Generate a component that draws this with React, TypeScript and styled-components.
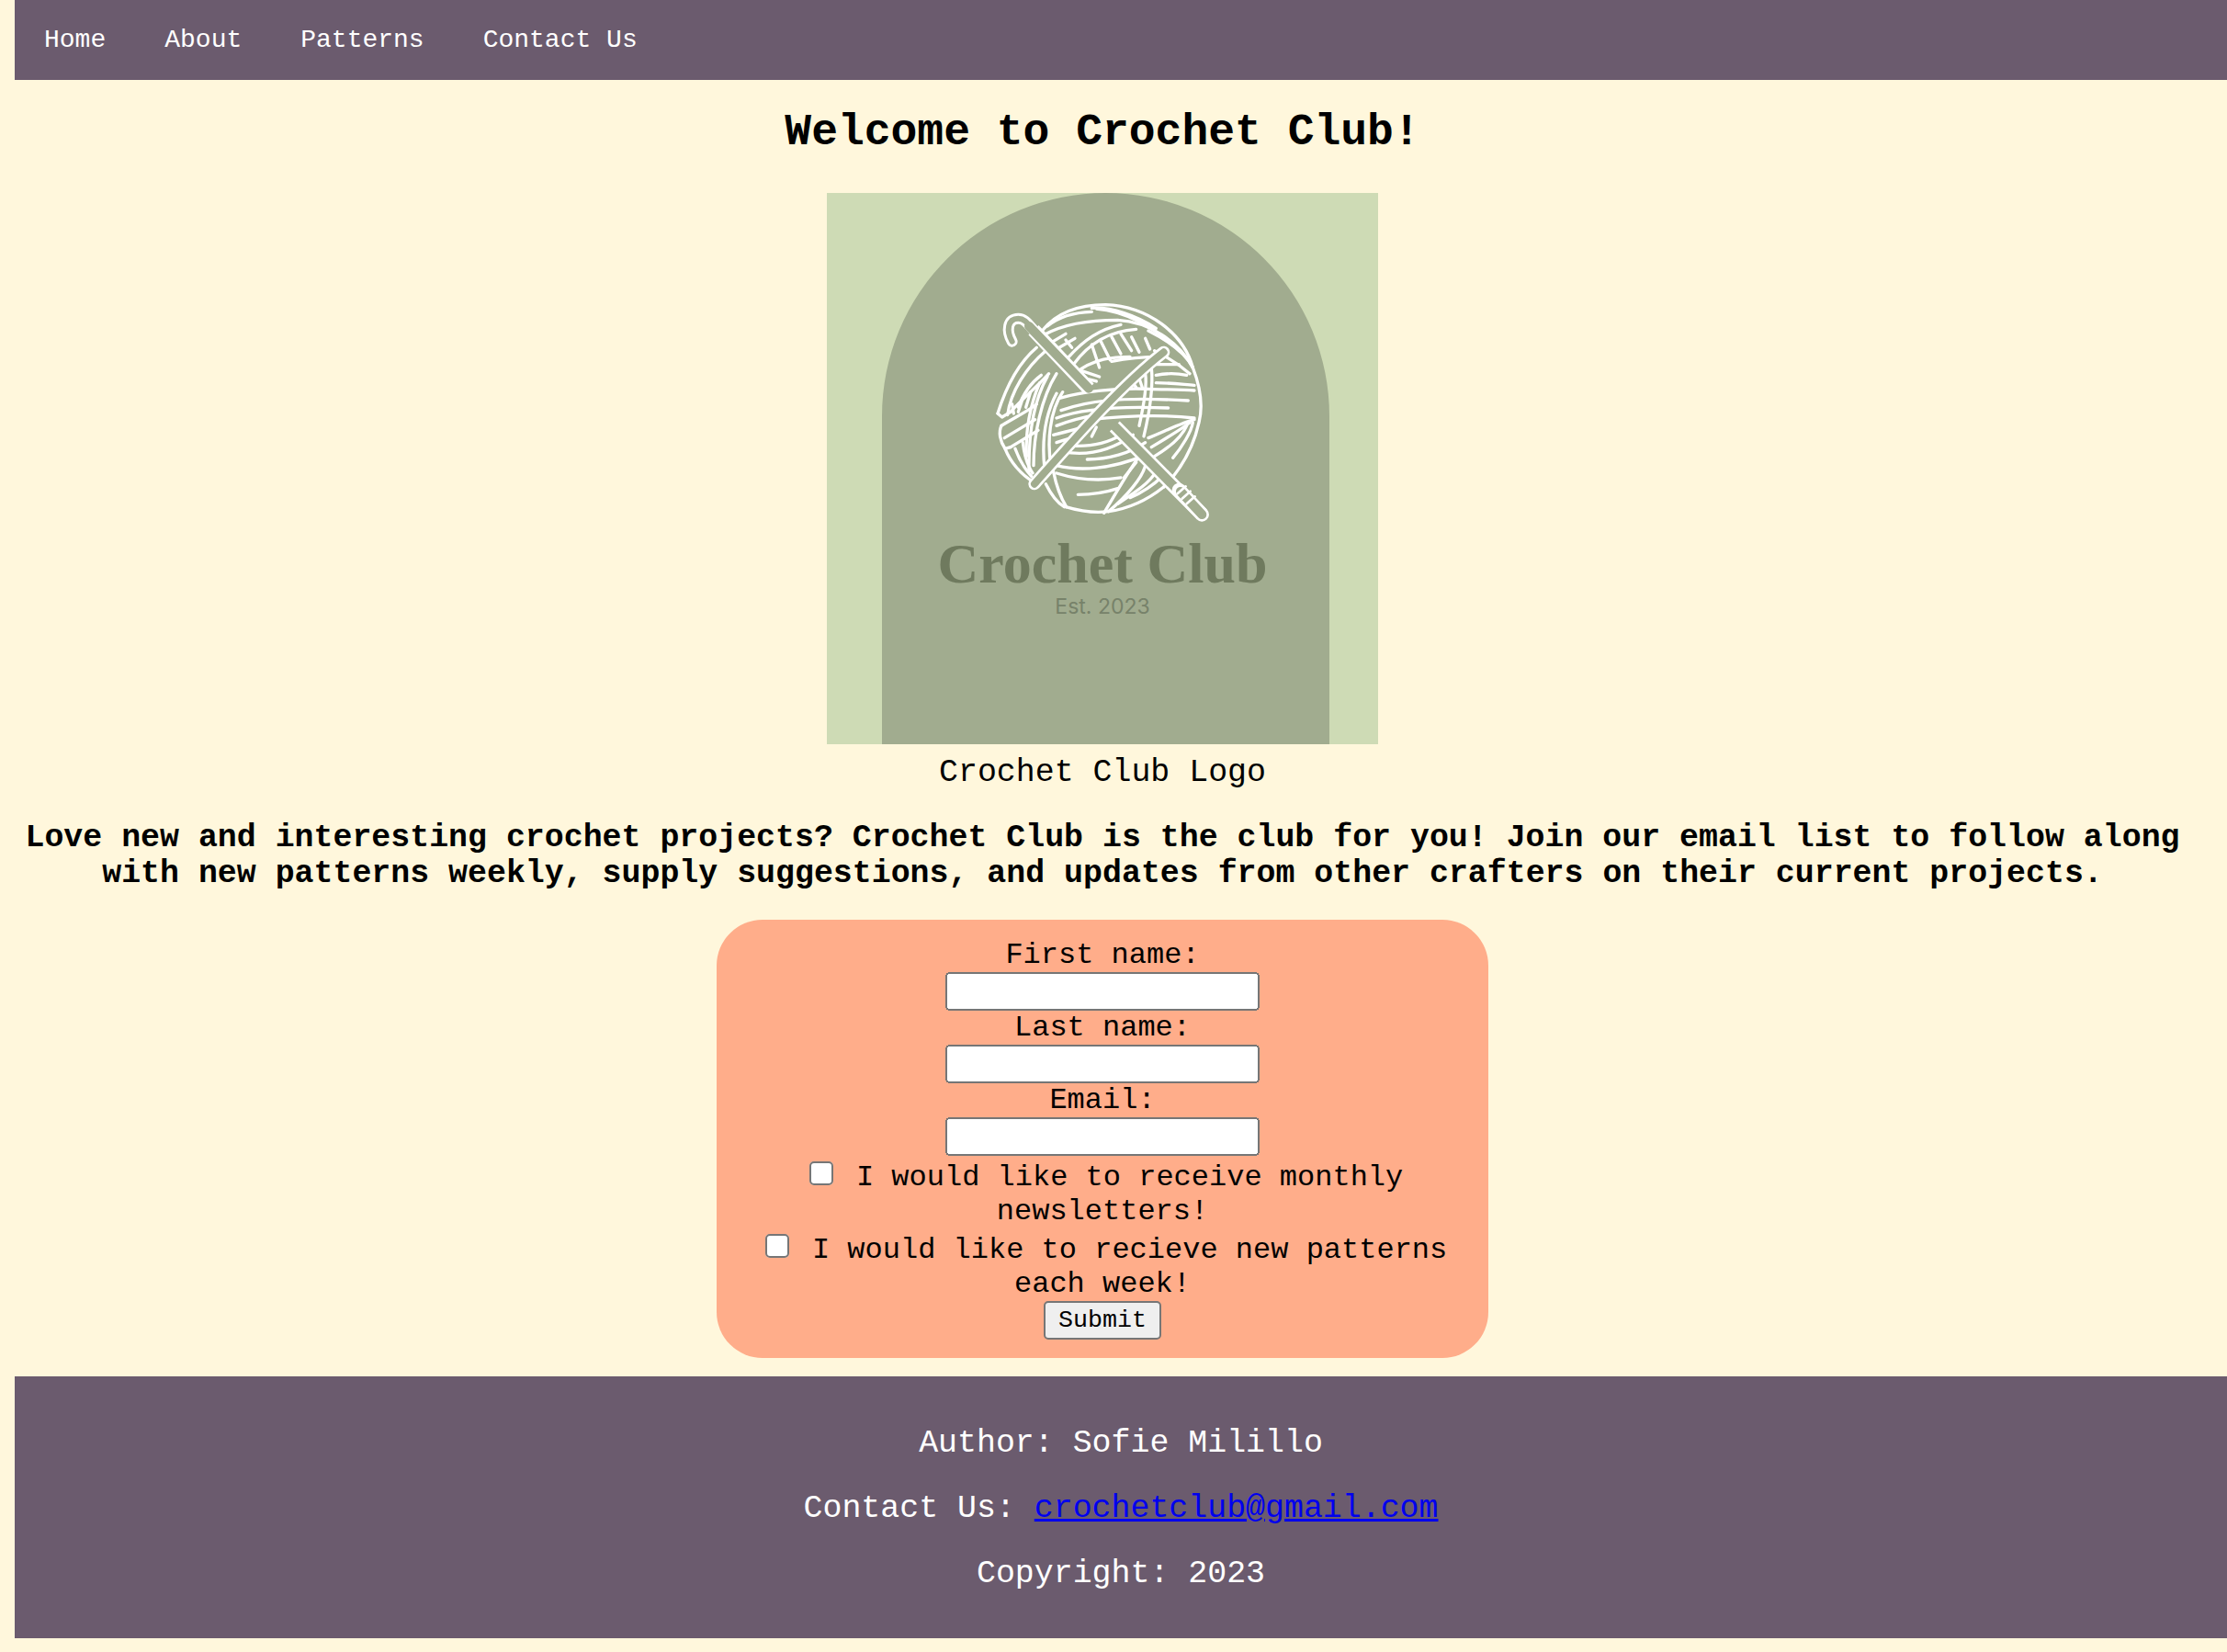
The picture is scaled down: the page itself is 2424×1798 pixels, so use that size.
import React from "react";
import styled, { createGlobalStyle } from "styled-components";

const Global = createGlobalStyle`
  html, body { margin: 0; padding: 0; background: #fff7dc; }
  body { overflow: hidden; font-family: "Liberation Mono", "Courier New", monospace; color: #000; }
`;
const Page = styled.div`
  padding: 0 0 15px 16px;
`;
const Nav = styled.nav`
  background: #6b5b6e;
  height: 87px;
  display: flex;
  align-items: center;
  padding-left: 0;
`;
const NavLink = styled.a`
  color: #fff;
  font-size: 28px;
  padding: 0 32px;
  text-decoration: none;
`;
const Main = styled.main`
  width: 2368px;
  text-align: center;
`;
const Title = styled.h1`
  font-size: 48px;
  line-height: 54px;
  margin: 30px 0 39px;
`;
const Figure = styled.figure`
  margin: 0;
  font-size: 34.9px;
  line-height: 40px;
  display: flex;
  flex-direction: column;
  align-items: center;
  gap: 11px;
`;
const Logo = styled.svg`
  width: 600px;
  height: 600px;
  display: block;
`;
const Intro = styled.p`
  font-size: 34.9px;
  line-height: 39px;
  font-weight: 700;
  margin: 31px 0 31px;
`;
const Form = styled.form`
  width: 840px;
  box-sizing: border-box;
  margin: 0 auto;
  padding: 20px;
  border-radius: 50px;
  background: #ffad8a;
  font-size: 32px;
  text-align: center;
`;
const TextInput = styled.input`
  zoom: 2;
  width: 171px;
  box-sizing: border-box;
  font-family: "Liberation Mono", monospace;
`;
const Check = styled.input`
  zoom: 2;
`;
const Submit = styled.button`
  zoom: 2;
  font-family: "Liberation Mono", monospace;
`;
const Footer = styled.footer`
  margin-top: 20px;
  height: 285px;
  box-sizing: border-box;
  padding-top: 53px;
  background: #6b5b6e;
  color: #fff;
  font-size: 34.9px;
  line-height: 40px;
  text-align: center;
`;
const FootLine = styled.p`
  margin: 0 0 31px;
`;

const strands = [
  "M255 178C300 122 370 95 460 95C600 100 715 190 745 300",
  "M270 165C310 132 360 120 415 118",
  "M262 192C320 160 400 145 500 145C600 150 700 215 745 300",
  "M430 108C520 115 620 165 700 245",
  "M415 106C480 102 560 130 625 172",
  "M600 180C660 210 720 250 745 300",
  "M745 300C772 370 778 430 765 480C745 570 700 640 650 690",
  "M330 755C380 770 430 775 470 770C540 760 600 730 650 690",
  "M108 450C130 380 170 290 235 235",
  "M140 455C150 380 200 300 265 245",
  "M108 450L122 462L150 445",
  "M175 430C190 390 215 350 250 325",
  "M150 445C190 400 240 360 275 320",
  "M155 420L160 450",
  "M190 400L175 445",
  "M215 380L200 430",
  "M120 490C170 460 210 440 235 420",
  "M130 530L230 470",
  "M150 560L240 505",
  "M120 490C110 510 115 540 132 565L150 560",
  "M132 565C150 610 185 650 222 672",
  "M165 565C178 600 195 630 218 655",
  "M190 545C195 590 205 620 222 645",
  "M300 320C250 400 225 520 225 620",
  "M270 330C230 400 208 500 210 640",
  "M245 350C215 420 198 500 202 590",
  "M320 380C280 440 265 540 285 640",
  "M300 385C265 450 250 540 262 640",
  "M290 640C300 690 320 735 332 755",
  "M265 680C280 710 300 740 325 755",
  "M310 400C380 380 500 365 600 370C650 372 710 372 750 375",
  "M315 440C400 410 500 395 730 408",
  "M300 465C380 435 500 425 665 432",
  "M410 470C500 460 620 450 750 465",
  "M300 490C340 475 400 460 430 455",
  "M290 520C330 510 370 500 400 490",
  "M300 545C330 535 350 530 370 522",
  "M320 575C400 590 480 570 550 520",
  "M340 555C410 560 470 545 510 520",
  "M400 600C470 600 540 580 590 545",
  "M300 620C380 640 480 630 580 590",
  "M300 645C380 670 450 670 510 660",
  "M370 715C420 715 470 705 500 695",
  "M600 530C650 510 710 480 750 470",
  "M610 560C660 530 710 500 735 480",
  "M620 590C670 560 710 525 725 490",
  "M680 595C710 560 740 510 745 480",
  "M455 775C500 700 540 630 570 590",
  "M470 770C530 720 580 660 590 620",
  "M500 745C560 705 600 680 625 640",
  "M520 660L560 610",
  "M540 725C580 710 620 680 640 660",
  "M340 265C390 210 440 175 510 160",
  "M280 220L330 190",
  "M300 240L360 205",
  "M330 210L350 235",
  "M355 290C410 215 480 180 560 175",
  "M415 225L440 300",
  "M445 215L475 275",
  "M480 200L510 255",
  "M510 190L545 245",
  "M545 200L570 250",
  "M590 205L605 240",
  "M360 320C420 270 490 265 540 265",
  "M380 310L440 330",
  "M390 335L430 345",
  "M480 280C530 270 570 265 640 265",
  "M610 300C615 350 610 420 585 525",
  "M590 320C595 350 590 400 570 490",
  "M625 325C660 318 700 320 725 325",
  "M625 290L700 290",
  "M620 245C660 265 700 290 735 320",
  "M625 350C670 350 710 355 750 358",
  "M540 335L560 365",
  "M570 335L580 365",
  "M415 525L430 495",
  "M350 560L395 510",
];

const YarnLogo = () => (
  <Logo viewBox="0 0 600 600" role="img" aria-label="Crochet Club logo">
    <rect width="600" height="600" fill="#cedbb5" />
    <path d="M60 600V243a243.500 243 0 0 1 487 0V600Z" fill="#a1ac8f" />
    <g transform="translate(150 90) scale(.3333)" fill="none" strokeLinecap="round" strokeLinejoin="round">
      <g stroke="#fff" strokeWidth="10">
        {strands.map((d) => (
          <path key={d} d={d} />
        ))}
      </g>
      <path d="M155 215C135 180 140 140 175 140C195 140 205 155 225 178" stroke="#fff" strokeWidth="36" />
      <path d="M155 215C135 180 140 140 175 140C195 140 205 155 225 178" stroke="#a1ac8f" strokeWidth="18" />
      <path d="M225 178L405 368M490 492L775 780" stroke="#fff" strokeWidth="46" strokeLinecap="butt" />
      <path d="M210 165L405 368M490 492L775 780" stroke="#a1ac8f" strokeWidth="30" />
      <path d="M775 780L700 700" stroke="#fff" strokeWidth="46" />
      <path d="M775 780L705 705" stroke="#a1ac8f" strokeWidth="30" />
      <path d="M695 712L722 688M710 728L737 704M725 745L752 721" stroke="#fff" strokeWidth="8" />
      <path d="M650 250C520 350 370 520 228 680" stroke="#fff" strokeWidth="40" />
      <path d="M650 250C520 350 370 520 228 680" stroke="#a1ac8f" strokeWidth="24" />
    </g>
    <text x="300" y="424" textAnchor="middle" fontFamily="'Liberation Serif', serif" fontWeight="700" fontSize="62" fill="#6f7a5e">
      Crochet Club
    </text>
    <text x="300" y="458" textAnchor="middle" fontFamily="Inter, sans-serif" fontSize="23" fill="#77826a">
      Est. 2023
    </text>
  </Logo>
);

export default function App() {
  return (
    <Page>
      <Global />
      <Nav>
        <NavLink>Home</NavLink>
        <NavLink>About</NavLink>
        <NavLink>Patterns</NavLink>
        <NavLink>Contact Us</NavLink>
      </Nav>
      <Main>
        <Title>Welcome to Crochet Club!</Title>
        <Figure>
          <YarnLogo />
          <figcaption>Crochet Club Logo</figcaption>
        </Figure>
        <Intro>
          Love new and interesting crochet projects? Crochet Club is the club for you! Join our email list to follow
          along with new patterns weekly, supply suggestions, and updates from other crafters on their current projects.
        </Intro>
        <Form>
          <label htmlFor="first">First name:</label>
          <br />
          <TextInput id="first" type="text" />
          <br />
          <label htmlFor="last">Last name:</label>
          <br />
          <TextInput id="last" type="text" />
          <br />
          <label htmlFor="email">Email:</label>
          <br />
          <TextInput id="email" type="text" />
          <br />
          <Check id="news" type="checkbox" /> <label htmlFor="news">I would like to receive monthly newsletters!</label>
          <br />
          <Check id="patterns" type="checkbox" />{" "}
          <label htmlFor="patterns">I would like to recieve new patterns each week!</label>
          <br />
          <Submit type="button">Submit</Submit>
        </Form>
      </Main>
      <Footer>
        <FootLine>Author: Sofie Milillo</FootLine>
        <FootLine>
          Contact Us: <a href="#mail">crochetclub@gmail.com</a>
        </FootLine>
        <FootLine>Copyright: 2023</FootLine>
      </Footer>
    </Page>
  );
}
